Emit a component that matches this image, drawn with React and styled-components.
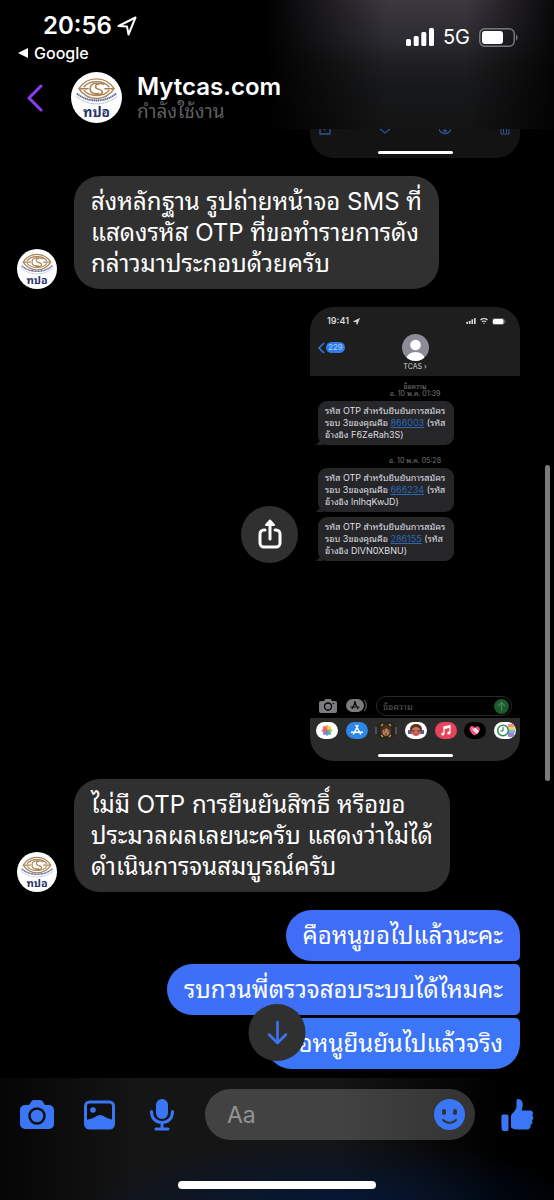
import React from 'react';
import styled, { createGlobalStyle } from 'styled-components';

const BLUE = '#3b76f6';

const GlobalStyle = createGlobalStyle`
  * {
    box-sizing: border-box;
  }

  body {
    margin: 0;
    background: #000;
    color: #fff;
    font-family: Inter, "Noto Sans Thai Looped", Loma, Garuda, Waree, "Noto Sans", sans-serif;
  }

  button {
    display: flex;
    align-items: center;
    justify-content: center;
    padding: 0;
    border: 0;
    background: none;
    color: inherit;
    font: inherit;
    cursor: pointer;
  }

  a {
    color: inherit;
    text-decoration: none;
  }

  svg {
    display: block;
    flex: none;
  }
`

const Page = styled.div`
  display: flex;
  flex-direction: column;
  min-height: 100vh;
  overflow: hidden;
`

/* ---------- header ---------- */

const Header = styled.header`
  padding: 10px 36px 0 18px;
  height: 129px;
  background:
    linear-gradient(to right, #000 48%, transparent 70%, transparent 84%, rgba(0, 0, 0, 0.85)),
    linear-gradient(#3c3740, #2d2c32 30%, #1e1e20 50%, #17181a 70%, #141414);
`

const StatusBar = styled.div`
  display: flex;
  justify-content: space-between;
  align-items: flex-start;
`

const Clock = styled.div`
  display: flex;
  align-items: center;
  gap: 5px;
  padding-left: 25px;
  font-size: 24px;
  font-weight: 600;
  line-height: 32px;
`

const BackToApp = styled.a`
  display: flex;
  align-items: center;
  gap: 6px;
  font-size: 16px;
  font-weight: 500;
  line-height: 22px;
`

const Signals = styled.div`
  display: flex;
  align-items: center;
  gap: 9px;
  padding-top: 15px;
  font-size: 20px;
  line-height: 24px;
`

const Contact = styled.div`
  display: flex;
  align-items: center;
  padding: 8px 0 0 9px;
`

const BackButton = styled.button`
  width: 16px;
  height: 44px;
  margin-right: 28px;
`

const ContactText = styled.div`
  margin-left: 15px;
`

const Name = styled.h1`
  margin: 0;
  font-size: 24px;
  font-weight: 600;
  line-height: 28px;
`

const Presence = styled.p`
  margin: 0;
  color: #5e5e5e;
  font-size: 19px;
  line-height: 22px;
`

/* ---------- conversation ---------- */

const Chat = styled.main`
  position: relative;
  flex: 1;
  display: flex;
  flex-direction: column;
  gap: 18px;
  padding: 0 34px 9px 17px;
`

const ScrollThumb = styled.div`
  position: absolute;
  right: 4px;
  top: 336px;
  width: 5px;
  height: 316px;
  border-radius: 3px;
  background: #7b7b7b;
`

const PhotoTail = styled.div`
  align-self: flex-end;
  width: 210px;
  height: 29px;
  border-radius: 0 0 24px 24px;
  background: #131313;
  overflow: hidden;
`

const TailIcons = styled.div`
  display: flex;
  justify-content: space-between;
  height: 22px;
  padding: 0 9px;
`

const Received = styled.div`
  display: flex;
  align-items: flex-end;
  gap: 17px;
`

const Bubble = styled.p`
  margin: 0;
  padding: 10px 17px;
  border-radius: 26px;
  background: #303030;
  font-size: 24px;
  line-height: 31px;
  white-space: nowrap;
`

const SentGroup = styled.div`
  display: flex;
  flex-direction: column;
  align-items: flex-end;
  gap: 3px;
`

const corners = {
  first: '26px 26px 5px 26px',
  middle: '26px 5px 5px 26px',
  last: '26px 5px 26px 26px',
};

const SentBubble = styled(Bubble)`
  border-radius: ${props => corners[props.$place]};
  background: ${props => props.$tone};
`

const PhotoRow = styled.div`
  display: flex;
  justify-content: flex-end;
  align-items: center;
  gap: 12px;
`

const RoundButton = styled.button`
  width: 57px;
  height: 57px;
  border-radius: 50%;
  background: #303030;
`

const JumpButton = styled(RoundButton)`
  position: absolute;
  bottom: 17px;
  left: 50%;
  transform: translateX(-50%);
  color: ${BLUE};
`

/* ---------- the photographed phone ---------- */

const Phone = styled.div`
  display: flex;
  flex-direction: column;
  width: 210px;
  height: 454px;
  border-radius: 24px;
  background: #000;
  overflow: hidden;
  color: #d8d8d8;
`

const PhoneTop = styled.div`
  height: 69px;
  padding: 8px 14px 0 8px;
  background: #1e1e1f;
`

const PhoneStatus = styled.div`
  display: flex;
  justify-content: space-between;
  align-items: center;
  padding-left: 9px;
  font-size: 9px;
  font-weight: 600;
  line-height: 12px;
`

const PhoneIcons = styled.div`
  display: flex;
  align-items: center;
  gap: 4px;
`

const PhoneNav = styled.div`
  display: grid;
  grid-template-columns: 1fr auto 1fr;
  align-items: center;
  padding-top: 7px;
  margin-right: -6px;
`

const Unread = styled.div`
  display: flex;
  align-items: center;
  gap: 1px;

  span {
    padding: 0 2px;
    border-radius: 6px;
    background: #2f7de8;
    color: #a9cdf8;
    font-size: 8px;
    line-height: 11px;
  }
`

const Sender = styled.div`
  margin-right: -6px;
  font-size: 7px;
  line-height: 11px;
  text-align: center;
`

const Stamp = styled.div`
  margin: 7px 0 4px;
  color: #77777a;
  font-size: 7px;
  line-height: 7px;
  text-align: center;
`

const Sms = styled.p`
  position: relative;
  align-self: flex-start;
  width: 136px;
  margin: 0 0 5px 8px;
  padding: 4px 0 4px 7px;
  border-radius: 9px;
  background: #262629;
  color: #dedee0;
  font-size: 9px;
  line-height: 12px;
  white-space: nowrap;

  &::after {
    content: "";
    position: absolute;
    left: -2px;
    bottom: 0;
    border: 4px solid transparent;
    border-bottom-color: #262629;
    border-top: 0;
  }

  a {
    color: #2b66b4;
    text-decoration: underline;
  }
`

const PhoneCompose = styled.div`
  display: flex;
  align-items: center;
  gap: 9px;
  margin-top: auto;
  padding: 0 8px 2px 9px;
`

const PhoneField = styled.div`
  flex: 1;
  display: flex;
  justify-content: space-between;
  align-items: center;
  height: 20px;
  padding: 0 2px 0 6px;
  border: 1px solid #29292b;
  border-radius: 10px;
  color: #5a5a5d;
  font-size: 9px;
`

const Drawer = styled.div`
  display: flex;
  flex-direction: column;
  justify-content: space-between;
  height: 43px;
  padding: 4px 0;
  background: #2b2b2c;
`

const Apps = styled.div`
  display: flex;
  justify-content: space-between;
  padding: 0 4px 0 6px;
`

const HomeLine = styled.div`
  width: ${props => props.$width}px;
  height: ${props => props.$thick}px;
  margin: 0 auto;
  border-radius: 4px;
  background: #fff;
`

/* ---------- composer ---------- */

const Footer = styled.footer`
  padding: 11px 20px 11px;
  background:
    radial-gradient(ellipse 45% 60% at 60% 110%, #03183a, transparent),
    linear-gradient(to right, #050505, #151515 25%, #151515 60%, #000 90%);
`

const Composer = styled.form`
  display: flex;
  align-items: center;
  margin-bottom: 41px;
  color: ${BLUE};
`

const Tools = styled.div`
  display: flex;
  gap: 30px;
  margin-right: 26px;
`

const Field = styled.label`
  flex: 1;
  display: flex;
  align-items: center;
  min-width: 0;
  height: 51px;
  margin-right: 26px;
  padding: 0 10px 0 22px;
  border-radius: 26px;
  background: linear-gradient(to right, #424242 50%, #333);
`

const TextInput = styled.input`
  flex: 1;
  min-width: 0;
  padding: 0;
  border: 0;
  outline: 0;
  background: none;
  color: #fff;
  font: inherit;
  font-size: 23px;

  &::placeholder {
    color: #949494;
    opacity: 1;
  }
`

function Logo({ size }) {
  return (
    <svg width={size} height={size} viewBox="0 0 52 52" role="img" aria-label="ทปอ">
      <circle cx="26" cy="26" r="26" fill="#fff" />
      <g fill="none" stroke="#ab8454" strokeWidth="1.500" strokeLinejoin="round">
        <path d="M8 17C13 9.500 19 7 26 7s13 2.500 18 10c-5 7.500-11 10-18 10S13 24.500 8 17z" />
        <path d="M13 15.500c3-4 7-5.500 13-5.500s10 1.500 13 5.500M13 18.500c3 4 7 5.500 13 5.500s10-1.500 13-5.500" />
        <path d="M9 17h9M34 17h9" />
        <path d="M28.500 12.500c-3.500-2-9-.5-9 4.500s5.500 6.500 9 4.500" />
        <path d="M34 13c-4-2.500-9-1-9 2 0 3.500 7 2 7 5.500 0 2.500-5 3.500-8 1" />
      </g>
      <path d="M6 22c6 5 13 7 20 7s14-2 20-7" fill="none" stroke="#56659a" strokeWidth="2" strokeDasharray="1.400 .5" />
      <path d="M5 25c7 5 14 7.500 21 7.500S40 30 47 25" fill="none" stroke="#a3acca" strokeWidth="1" strokeDasharray="1 .4" />
      <text x="26" y="46" textAnchor="middle" fontSize="14" fontWeight="700" fill="#28336b">ทปอ</text>
    </svg>
  );
}

function LocationArrow({ size, filled }) {
  return (
    <svg width={size} height={size} viewBox="0 0 20 20" fill={filled ? 'currentColor' : 'none'} stroke="currentColor" strokeWidth="2" strokeLinejoin="round">
      <path d="M18.500 1.500L1.500 10l8.500.500L11.500 18.500z" />
    </svg>
  );
}

function Bars({ width, height }) {
  return (
    <svg width={width} height={height} viewBox="0 0 28 18" fill="currentColor">
      <rect x="0" y="11" width="5" height="7" rx="1.500" />
      <rect x="7.700" y="8" width="5" height="10" rx="1.500" />
      <rect x="15.300" y="4" width="5" height="14" rx="1.500" />
      <rect x="23" y="0" width="5" height="18" rx="1.500" />
    </svg>
  );
}

function Battery() {
  return (
    <svg width="39" height="19" viewBox="0 0 39 19">
      <rect x=".75" y=".75" width="34.500" height="17.500" rx="5" fill="none" stroke="#78787a" strokeWidth="1.500" />
      <rect x="3" y="3" width="21" height="13" rx="3" fill="#fff" />
      <path d="M37 6.500c2 1 2 5 0 6z" fill="#78787a" />
    </svg>
  );
}

function TailGlyphs() {
  return (
    <TailIcons>
      <svg width="12" height="7" viewBox="0 0 12 7" fill="none" stroke="#2c5597" strokeWidth="1.300"><path d="M1 0v5h10V0M5 1l1-1" /></svg>
      <svg width="12" height="7" viewBox="0 0 12 7" fill="none" stroke="#2c5597" strokeWidth="1.300"><path d="M1 0l5 4 5-4" /></svg>
      <svg width="12" height="7" viewBox="0 0 12 7" fill="none" stroke="#2c5597" strokeWidth="1.300"><path d="M0 0c2 6 10 6 12 0M6 0v2M4 2h4" /></svg>
      <svg width="12" height="7" viewBox="0 0 12 7" fill="none" stroke="#2c5597" strokeWidth="1"><path d="M2 0v5h8V0M4.500 0v4M7.500 0v4" /></svg>
    </TailIcons>
  );
}

function AppStrip() {
  const petals = ['#f39a2d', '#f4d13d', '#9fce4a', '#4fb38a', '#4f8fd8', '#8b6fc9', '#d9628f', '#ee5d43'];
  return (
    <Apps>
      <svg width="22" height="17" viewBox="0 0 22 17">
        <rect width="22" height="17" rx="8.500" fill="#fff" />
        {petals.map((color, i) => (
          <ellipse key={color} cx="11" cy="5.800" rx="1.800" ry="2.800" fill={color} opacity=".85" transform={`rotate(${i * 45} 11 8.500)`} />
        ))}
      </svg>
      <svg width="22" height="17" viewBox="0 0 22 17">
        <rect width="22" height="17" rx="8.500" fill="#2e86e6" />
        <path d="M12 3.500L7.500 12M10 3.500l4.500 8.500M5.500 10.300h7M14 10.300h2.500" stroke="#fff" strokeWidth="1.500" strokeLinecap="round" />
      </svg>
      <svg width="22" height="17" viewBox="0 0 22 17">
        <rect width="22" height="17" rx="8.500" fill="#282421" />
        <path d="M6 4l2-2M16 4l-2-2M6 13l2 2M16 13l-2 2" stroke="#c3a238" strokeWidth="1.200" />
        <path d="M1 5v7M21 5v7" stroke="#59606f" strokeWidth="1.500" />
        <ellipse cx="11" cy="8.500" rx="5.500" ry="6" fill="#49301f" />
        <ellipse cx="11" cy="9.500" rx="3.500" ry="4.300" fill="#b57e5b" />
        <path d="M7.500 8c2 0 3-1 4-2 1 1 2 2 3 2 0-6-7-6-7 0z" fill="#49301f" />
        <path d="M9 9h1M12.500 9h1M10 12h2" stroke="#402a21" />
      </svg>
      <svg width="22" height="17" viewBox="0 0 22 17">
        <rect width="22" height="17" rx="8.500" fill="#fff" />
        <path d="M3 8h16v4H3z" fill="#5360a8" />
        <ellipse cx="11" cy="7" rx="6" ry="5" fill="#593322" />
        <ellipse cx="11" cy="9.500" rx="4.500" ry="4.500" fill="#cf7457" />
        <path d="M7 9h3M12 9h3" stroke="#432a22" />
        <path d="M8 11c2 2 4 2 6 0" stroke="#d43f36" strokeWidth="1.500" fill="none" />
      </svg>
      <svg width="22" height="17" viewBox="0 0 22 17">
        <rect width="22" height="17" rx="8.500" fill="#e8435a" />
        <path d="M9 12V5l6-1.500V11M9 6.500L15 5" stroke="#fff" strokeWidth="1.300" fill="none" />
        <circle cx="7.800" cy="12" r="1.600" fill="#fff" />
        <circle cx="13.800" cy="11" r="1.600" fill="#fff" />
      </svg>
      <svg width="22" height="17" viewBox="0 0 22 17">
        <rect width="22" height="17" rx="8.500" fill="#000" />
        <path d="M10.500 13.500C4 9.500 5 4 8 4c1.500 0 2.500 1 3 2 2-3 6-1 4.500 3-.8 2-2.500 3-5 4.500z" fill="#f0558a" />
        <path d="M9 7l4 4M11 6.500l3 3" stroke="#fff" strokeWidth="1.300" strokeLinecap="round" />
      </svg>
      <svg width="22" height="17" viewBox="0 0 22 17">
        <clipPath id="pill"><rect width="22" height="17" rx="8.500" /></clipPath>
        <g clipPath="url(#pill)">
          <rect width="22" height="17" fill="#fff" />
          <path d="M14 2h6v3h-6z" fill="#ef8e72" />
          <path d="M14 5h7v3h-7z" fill="#f0d36b" />
          <path d="M14 8h7v3h-7z" fill="#75b9e8" />
          <path d="M14 11h6v4h-6z" fill="#a580d6" />
          <circle cx="9" cy="8.500" r="5.300" fill="#fff" stroke="#2f8a58" strokeWidth="1.500" />
          <path d="M9 5v4H6.500" stroke="#2f6a4c" fill="none" />
        </g>
      </svg>
    </Apps>
  );
}

const messages = [
  { stamp: 'อ. 10 พ.ค. 01:39', title: 'ข้อความ', code: '866003', refNo: 'F6ZeRah3S' },
  { stamp: 'อ. 10 พ.ค. 05:28', code: '666234', refNo: 'lnlhqKwJD' },
  { code: '286155', refNo: 'DlVN0XBNU' },
];

function PhoneShot() {
  return (
    <Phone>
      <PhoneTop>
        <PhoneStatus>
          <PhoneIcons>19:41 <LocationArrow size={7} filled /></PhoneIcons>
          <PhoneIcons>
            <Bars width={10} height={6} />
            <svg width="8" height="6" viewBox="0 0 16 12" fill="none" stroke="currentColor" strokeWidth="2.500">
              <path d="M1 4c4-4 10-4 14 0M4 7.500c2-2 6-2 8 0M7 10.500h2" />
            </svg>
            <svg width="14" height="7" viewBox="0 0 14 7">
              <rect x=".4" y=".4" width="11.700" height="6.200" rx="2" fill="none" stroke="#777" strokeWidth=".8" />
              <rect x="1" y="1" width="10.500" height="5" rx="1.500" fill="#fff" />
              <path d="M13 2.500v2" stroke="#777" />
            </svg>
          </PhoneIcons>
        </PhoneStatus>
        <PhoneNav>
          <Unread>
            <svg width="7" height="12" viewBox="0 0 7 12" fill="none" stroke="#2f7de8" strokeWidth="1.500"><path d="M6 1L1 6l5 5" /></svg>
            <span>229</span>
          </Unread>
          <svg width="27" height="27" viewBox="0 0 27 27">
            <clipPath id="face"><circle cx="13.500" cy="13.500" r="13.500" /></clipPath>
            <g clipPath="url(#face)">
              <rect width="27" height="27" fill="#8b8c96" />
              <circle cx="13.500" cy="11" r="5.300" fill="#fff" />
              <ellipse cx="13.500" cy="24.500" rx="9" ry="6.500" fill="#fff" />
            </g>
          </svg>
        </PhoneNav>
        <Sender>TCAS ›</Sender>
      </PhoneTop>
      {messages.map(sms => (
        <React.Fragment key={sms.code}>
          {sms.stamp && <Stamp>{sms.title}{sms.title && <br />}{sms.stamp}</Stamp>}
          <Sms>
            รหัส OTP สำหรับยืนยันการสมัคร<br />
            รอบ 3ของคุณคือ <a href={`#${sms.code}`}>{sms.code}</a> (รหัส<br />
            อ้างอิง {sms.refNo})
          </Sms>
        </React.Fragment>
      ))}
      <PhoneCompose>
        <svg width="18" height="14" viewBox="0 0 18 14">
          <path d="M2 2h3l1.500-2h5L13 2h3a2 2 0 0 1 2 2v8a2 2 0 0 1-2 2H2a2 2 0 0 1-2-2V4a2 2 0 0 1 2-2z" fill="#7c7c7e" />
          <circle cx="9" cy="7.500" r="3.500" fill="none" stroke="#000" strokeWidth="1.300" />
          <circle cx="14.500" cy="4.500" r=".8" fill="#000" />
        </svg>
        <svg width="21" height="14" viewBox="0 0 21 14">
          <rect width="18" height="13" rx="6.500" fill="#7c7c7e" />
          <path d="M9.700 2.500L6 10M8.300 2.500L12 10M4.500 8h5.500M12 8h1.500" stroke="#000" strokeWidth="1.200" />
          <path d="M18 1c3 3 3 8 0 11" fill="none" stroke="#7c7c7e" />
        </svg>
        <PhoneField>
          ข้อความ
          <svg width="15" height="15" viewBox="0 0 15 15">
            <circle cx="7.500" cy="7.500" r="7.500" fill="#1b5a2c" />
            <path d="M7.500 12V3.500M4 7l3.500-3.500L11 7" fill="none" stroke="#4a8258" strokeWidth="1.300" />
          </svg>
        </PhoneField>
      </PhoneCompose>
      <Drawer>
        <AppStrip />
        <HomeLine $width={75} $thick={3} />
      </Drawer>
    </Phone>
  );
}

export default function App() {
  return (
    <>
      <GlobalStyle />
      <Page>
        <Header>
          <StatusBar>
            <div>
              <Clock>20:56 <LocationArrow size={20} /></Clock>
              <BackToApp href="#google">
                <svg width="10" height="10" viewBox="0 0 10 10" fill="currentColor"><path d="M0 5l10-5v10z" /></svg>
                Google
              </BackToApp>
            </div>
            <Signals>
              <Bars width={28} height={18} />
              5G
              <Battery />
            </Signals>
          </StatusBar>
          <Contact>
            <BackButton aria-label="Back">
              <svg width="16" height="28" viewBox="0 0 16 28" fill="none" stroke="#8a3df5" strokeWidth="3" strokeLinecap="round" strokeLinejoin="round">
                <path d="M14 2L2 14l12 12" />
              </svg>
            </BackButton>
            <Logo size={51} />
            <ContactText>
              <Name>Mytcas.com</Name>
              <Presence>กำลังใช้งาน</Presence>
            </ContactText>
          </Contact>
        </Header>

        <Chat>
          <PhotoTail>
            <TailGlyphs />
            <HomeLine $width={75} $thick={3} />
          </PhotoTail>

          <Received>
            <Logo size={40} />
            <Bubble>
              ส่งหลักฐาน รูปถ่ายหน้าจอ SMS ที่<br />
              แสดงรหัส OTP ที่ขอทำรายการดัง<br />
              กล่าวมาประกอบด้วยครับ
            </Bubble>
          </Received>

          <PhotoRow>
            <RoundButton aria-label="Share">
              <svg width="26" height="32" viewBox="0 0 26 32" fill="none" stroke="#fff" strokeWidth="3" strokeLinecap="round" strokeLinejoin="round">
                <path d="M8 12H7a4 4 0 0 0-4 4v9a4 4 0 0 0 4 4h12a4 4 0 0 0 4-4v-9a4 4 0 0 0-4-4h-1M13 21V7" />
                <path d="M13 2.500L17 7H9z" fill="#fff" strokeWidth="2" />
              </svg>
            </RoundButton>
            <PhoneShot />
          </PhotoRow>

          <Received>
            <Logo size={40} />
            <Bubble>
              ไม่มี OTP การยืนยันสิทธิ์ หรือขอ<br />
              ประมวลผลเลยนะครับ แสดงว่าไม่ได้<br />
              ดำเนินการจนสมบูรณ์ครับ
            </Bubble>
          </Received>

          <SentGroup>
            <SentBubble $place="first" $tone="#406df7">คือหนูขอไปแล้วนะคะ</SentBubble>
            <SentBubble $place="middle" $tone="#3e70f7">รบกวนพี่ตรวจสอบระบบได้ไหมคะ</SentBubble>
            <SentBubble $place="last" $tone="#3b75f8">คือหนูยืนยันไปแล้วจริง</SentBubble>
          </SentGroup>

          <JumpButton aria-label="Jump to latest">
            <svg width="20" height="24" viewBox="0 0 20 24" fill="none" stroke="currentColor" strokeWidth="2.500" strokeLinecap="round" strokeLinejoin="round">
              <path d="M10 1v21M1.500 13.500L10 22l8.500-8.500" />
            </svg>
          </JumpButton>
          <ScrollThumb />
        </Chat>

        <Footer>
          <Composer onSubmit={e => e.preventDefault()}>
            <Tools>
              <button type="button" aria-label="Camera">
                <svg width="34" height="30" viewBox="0 0 34 30" fill="currentColor">
                  <path d="M5 5h4l2-3c.7-1.200 1.500-2 3-2h6c1.500 0 2.300.8 3 2l2 3h4a5 5 0 0 1 5 5v14a5 5 0 0 1-5 5H5a5 5 0 0 1-5-5V10a5 5 0 0 1 5-5z" />
                  <circle cx="17" cy="16" r="7.500" fill="currentColor" stroke="#101010" strokeWidth="2.500" />
                </svg>
              </button>
              <button type="button" aria-label="Gallery">
                <svg width="31" height="30" viewBox="0 0 31 30">
                  <rect x="1.500" y="2" width="28" height="26" rx="4" fill="none" stroke="currentColor" strokeWidth="3" />
                  <circle cx="9" cy="10" r="2.800" fill="currentColor" />
                  <path d="M2 20l4-1c5-1 7-4 10-4s6 3 10 4l4 1v5a4 4 0 0 1-4 4H6a4 4 0 0 1-4-4z" fill="currentColor" />
                </svg>
              </button>
              <button type="button" aria-label="Voice message">
                <svg width="34" height="32" viewBox="-4 0 34 32">
                  <rect x="7" y="0" width="12" height="20" rx="6" fill="currentColor" />
                  <path d="M2.500 12.500c0 7 4.500 11 10.500 11s10.500-4 10.500-11M13 24v6M7 30h12" fill="none" stroke="currentColor" strokeWidth="3" strokeLinecap="round" />
                </svg>
              </button>
            </Tools>
            <Field>
              <TextInput type="text" placeholder="Aa" aria-label="Message" />
              <button type="button" aria-label="Emoji">
                <svg width="31" height="31" viewBox="0 0 31 31">
                  <circle cx="15.500" cy="15.500" r="15.500" fill="currentColor" />
                  <rect x="8" y="10" width="4" height="6" rx="2" fill="#333" />
                  <rect x="19" y="10" width="4" height="6" rx="2" fill="#333" />
                  <path d="M9 21c4 4 9 4 13 0" fill="none" stroke="#333" strokeWidth="2.200" strokeLinecap="round" />
                </svg>
              </button>
            </Field>
            <button type="button" aria-label="Like">
              <svg width="33" height="34" viewBox="0 0 33 34" fill="currentColor">
                <path d="M2 16.500h4q1.500 0 1.500 1.500v13.500q0 1.500-1.500 1.500H2.500Q1 33 .7 31 0 25 .5 18 .6 16.500 2 16.500z" />
                <path d="M10 18c0-2 5-5 5.500-9 .3-3-.8-8 1.500-8 4 0 5.500 4 4.500 8-.4 1.500-1 3-.5 3.500h8c3 0 4 3 2 5 2 1.500 1.500 4 0 5 1 2 0 4-1.500 4.500.5 2-.5 4.500-3.500 4.500H17c-4 0-7-1-7-3z" />
              </svg>
            </button>
          </Composer>
          <HomeLine $width={198} $thick={8} />
        </Footer>
      </Page>
    </>
  );
}
